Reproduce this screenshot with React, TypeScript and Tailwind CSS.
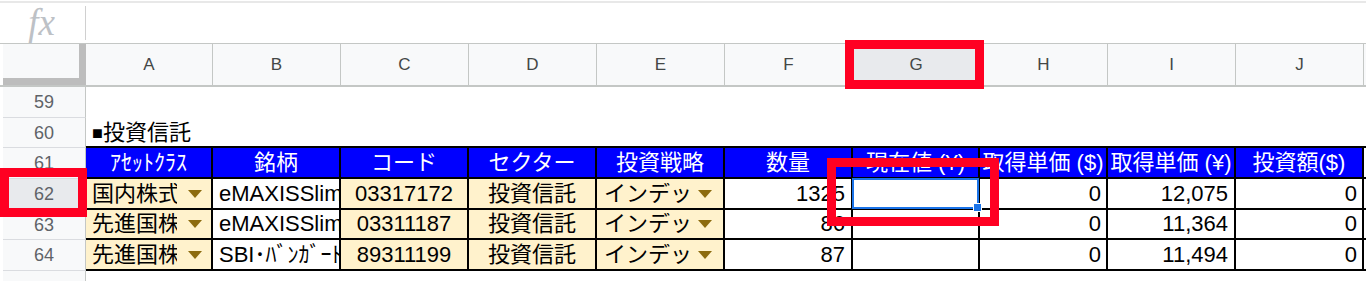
import type { ReactNode } from "react";
import clsx from "clsx";

const FONT = "font-['Liberation_Sans','Noto_Sans_CJK_JP',sans-serif]";

type Col = { key: string; w: string };

// column widths include the right grid line
const COLS: Col[] = [
  { key: "A", w: "w-[127px]" },
  { key: "B", w: "w-[128px]" },
  { key: "C", w: "w-[128px]" },
  { key: "D", w: "w-[128px]" },
  { key: "E", w: "w-[128px]" },
  { key: "F", w: "w-[128px]" },
  { key: "G", w: "w-[127px]" },
  { key: "H", w: "w-[128px]" },
  { key: "I", w: "w-[128px]" },
  { key: "J", w: "w-[128px]" },
];

const HEADERS = ["ｱｾｯﾄｸﾗｽ", "銘柄", "コード", "セクター", "投資戦略", "数量", "現在値 (¥)", "取得単価 ($)", "取得単価 (¥)", "投資額($)"];

interface Fund { n: number; asset: string; name: string; code: string; sector: string; strategy: string; qty: string; costUsd: string; costJpy: string; invest: string; }

const FUNDS: Fund[] = [
  { n: 62, asset: "国内株式", name: "eMAXISSlim国内株式(TOPIX)", code: "03317172", sector: "投資信託", strategy: "インデックス", qty: "1325", costUsd: "0", costJpy: "12,075", invest: "0" },
  { n: 63, asset: "先進国株式", name: "eMAXISSlim先進国株式インデックス", code: "03311187", sector: "投資信託", strategy: "インデックス", qty: "86", costUsd: "0", costJpy: "11,364", invest: "0" },
  { n: 64, asset: "先進国株式", name: "SBI･ﾊﾞﾝｶﾞｰﾄﾞ･S&P500", code: "89311199", sector: "投資信託", strategy: "インデックス", qty: "87", costUsd: "0", costJpy: "11,494", invest: "0" },
];

// red annotation frame drawn over the sheet
function RedBox({ className }: { className: string }) {
  return <div className={clsx("pointer-events-none absolute z-20 border-[9px] border-[#ff0022]", className)} />;
}

function RowHead({ n, selected, children }: { n?: number; selected?: boolean; children?: ReactNode }) {
  return (
    <div
      className={clsx(
        "relative flex w-[83px] shrink-0 items-center justify-center border-r border-b border-r-[#c4c7c5] border-b-[#dadce0] text-[18px] text-[#5f6368]",
        selected ? "bg-[#e8eaed]" : "bg-[#f8f9fa]",
      )}
    >
      {n}
      {children}
    </div>
  );
}

function SheetRow({ h, n, selected, mark, children }: { h: string; n?: number; selected?: boolean; mark?: ReactNode; children?: ReactNode }) {
  return (
    <div className={clsx("flex", h)}>
      <div className="w-[3px] shrink-0" />
      <RowHead n={n} selected={selected}>{mark}</RowHead>
      <div className="flex min-w-0 flex-1">{children}</div>
    </div>
  );
}

function Arrow() {
  return (
    <svg viewBox="0 0 14 8" className="h-[8px] w-[14px] shrink-0">
      <path d="M0 0h14L7 8z" fill="#8c6b0e" />
    </svg>
  );
}

function Cell({ w, className, children }: { w: string; className?: string; children?: ReactNode }) {
  return (
    <div className={clsx("flex shrink-0 items-center whitespace-nowrap border-r-2 border-b-2 border-black", w, className)}>
      {children}
    </div>
  );
}

function Pick({ text, pl, span, ml }: { text: string; pl: string; span: string; ml: string }) {
  return (
    <div className={clsx("flex items-center", pl)}>
      <span className={clsx("overflow-hidden whitespace-nowrap", span)}>{text}</span>
      <span className={clsx("flex", ml)}><Arrow /></span>
    </div>
  );
}

function FundRow({ f }: { f: Fund }) {
  const sel = f.n === 62;
  const beige = "bg-[#fff2cc]";
  return (
    <SheetRow
      h={f.n === 63 ? "h-[30px]" : "h-[31px]"}
      n={f.n}
      selected={sel}
      mark={sel ? <RedBox className="left-[-3px] right-[-2px] top-[-11px] bottom-[-8px]" /> : null}
    >
      <Cell w={COLS[0].w} className={beige}>
        <Pick text={f.asset} pl="pl-[6px]" span="w-[85px]" ml="ml-[11px]" />
      </Cell>
      <Cell w={COLS[1].w} className="overflow-hidden bg-white pl-[6px]">{f.name}</Cell>
      <Cell w={COLS[2].w} className={clsx(beige, "justify-center")}>{f.code}</Cell>
      <Cell w={COLS[3].w} className={clsx(beige, "justify-center")}>{f.sector}</Cell>
      <Cell w={COLS[4].w} className={beige}>
        <Pick text={f.strategy} pl="pl-[7px]" span="w-[86px]" ml="ml-[8px]" />
      </Cell>
      <Cell w={COLS[5].w} className="justify-end bg-white pr-[6px]">{f.qty}</Cell>
      <Cell w={COLS[6].w} className="relative bg-white">
        {sel && (
          <>
            <div className="absolute -top-px -right-px -bottom-px -left-px z-10 border-2 border-[#1a73e8]">
              <div className="absolute right-[-5px] bottom-[-5px] h-[9px] w-[9px] border border-white bg-[#1a73e8]" />
            </div>
            <RedBox className="left-[-26px] right-[-21px] top-[-21px] bottom-[-18px]" />
          </>
        )}
      </Cell>
      <Cell w={COLS[7].w} className="justify-end bg-white pr-[5px]">{f.costUsd}</Cell>
      <Cell w={COLS[8].w} className="justify-end bg-white pr-[6px]">{f.costJpy}</Cell>
      <Cell w={COLS[9].w} className="justify-end bg-white pr-[5px]">{f.invest}</Cell>
      <div className="flex-1 border-b-2 border-black" />
    </SheetRow>
  );
}

export default function App() {
  return (
    <div className={clsx("h-[281px] w-[1366px] overflow-hidden bg-white text-[22px] leading-none text-black", FONT)}>
      {/* formula bar */}
      <div className="mt-[1px] flex h-[43px] border-t-2 border-b border-t-[#e8e8e8] border-b-[#c4c7c5]">
        <div className="flex w-[85px] items-center justify-center pb-[2px] pr-[2px] font-['Liberation_Serif',serif] text-[37px] italic text-[#bdc1c6]">fx</div>
        <div className="my-[3px] w-px bg-[#d0d0d0]" />
      </div>

      {/* column letters */}
      <div className="flex h-[43px] border-b-2 border-[#c4c7c5]">
        <div className="w-[3px] shrink-0" />
        <div className="w-[83px] shrink-0 border-r-[7px] border-b-[7px] border-[#bdbdbd] bg-[#f8f9fa]" />
        {COLS.map((c) => (
          <div
            key={c.key}
            className={clsx(
              "relative flex shrink-0 items-center justify-center border-r border-[#c4c7c5] text-[17px] text-[#444746]",
              c.w,
              c.key === "G" ? "bg-[#e8eaed]" : "bg-[#f8f9fa]",
            )}
          >
            {c.key}
            {c.key === "G" && <RedBox className="left-[-8px] right-[-5px] top-[-4px] bottom-[-4px]" />}
          </div>
        ))}
        <div className="flex-1 bg-[#f8f9fa]" />
      </div>

      <SheetRow h="h-[31px]" n={59} />
      <SheetRow h="h-[30px]" n={60}>
        <div className="flex flex-1 items-center border-b-2 border-black pl-[6px] pt-[2px]">
          <span className="text-[18px]">■</span>投資信託
        </div>
      </SheetRow>
      <SheetRow h="h-[31px]" n={61}>
        {COLS.map((c, i) => (
          <Cell key={c.key} w={c.w} className="justify-center overflow-hidden bg-[#0000ff] text-white">{HEADERS[i]}</Cell>
        ))}
        <div className="flex-1 border-b-2 border-black" />
      </SheetRow>
      {FUNDS.map((f) => <FundRow key={f.n} f={f} />)}
      <SheetRow h="h-[20px]" />
    </div>
  );
}
